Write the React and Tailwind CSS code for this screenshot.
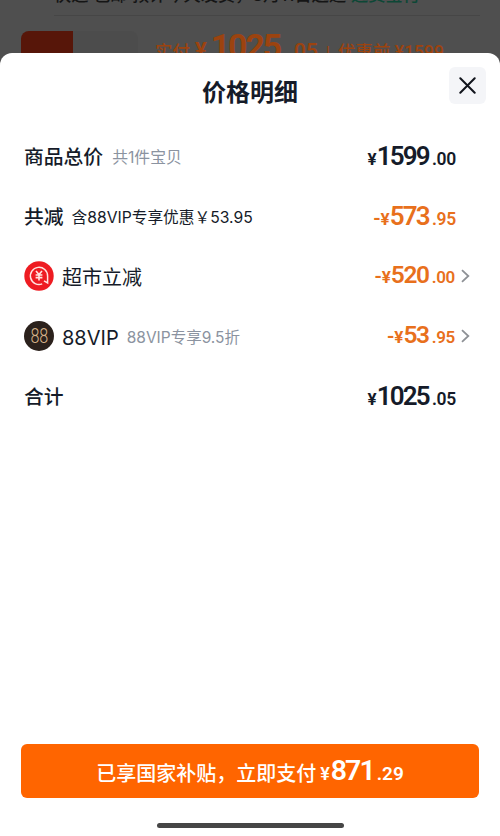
import React from 'react'

function Price({ int, dec, minus, small }) {
    return (
        <div className="flex items-baseline font-['Roboto','Noto_Sans_CJK_SC',sans-serif] font-semibold whitespace-nowrap">
            {minus && <span className="text-[20px] leading-none">-</span>}
            <span className="text-[17px] leading-none font-bold">¥</span>
            <span className={"leading-none " + (small ? "text-[24.5px] tracking-[-1.4px]" : "text-[26px] tracking-[-1.8px]")}>{int}</span>
            <span className={"leading-none tracking-[-0.3px] ml-[3px] " + (small ? "text-[17px]" : "text-[17.5px]")}>.{dec}</span>
        </div>
    )
}

function Arrow() {
    return (
        <svg className="w-[9px] h-[14px]" viewBox="0 0 9 14" fill="none" stroke="#8e9196" strokeWidth="1.8">
            <path d="M1 1.2L7.3 7L1 12.8" />
        </svg>
    )
}

function Row({ children, int, dec, minus, arrow }) {
    return (
        <div className={"flex h-[60px] items-center justify-between pl-6 " + (arrow ? "pr-[30px]" : "pr-11")}>
            <div className="flex items-center whitespace-nowrap">{children}</div>
            <div className={"flex items-center gap-[6px] pb-px " + (minus ? "text-[#e8701c]" : "text-[#151b29]")}>
                <Price int={int} dec={dec} minus={minus} small={arrow} />
                {arrow && <Arrow />}
            </div>
        </div>
    )
}

export default function App() {
    return (
        <div className="relative flex flex-col w-[500px] h-[836px] overflow-hidden bg-[#4f4f4f] font-['Inter','Noto_Sans_CJK_SC',sans-serif] text-[#151b29]">
            {/* dimmed order page */}
            <div className="h-[53px] shrink-0 overflow-hidden">
                <div className="h-[16px] flex items-end ml-[54px] mr-5 border-b border-[#464646] text-[17.2px] whitespace-nowrap">
                    <div className="leading-[20px] pb-[10px] text-[#151515] font-medium">快递 包邮 预计今天发货，8月11日送达</div>
                    <div className="leading-[20px] pb-[10px] ml-[5px] text-[#0d4736] font-medium">运费宝付</div>
                </div>
                <div className="flex">
                    <div className="ml-[21px] mt-[15px] h-[60px] w-[117px] rounded-lg bg-[#4c4c4c] overflow-hidden">
                        <div className="h-full w-[52px] bg-[#571609]"></div>
                    </div>
                    <div className="ml-[17px] mt-[9px] flex items-baseline text-[#9c430f] font-medium whitespace-nowrap font-['Roboto','Noto_Sans_CJK_SC',sans-serif]">
                        <span className="text-[17.5px]">实付</span>
                        <span className="text-[22px] ml-[5px] font-bold">¥</span>
                        <span className="text-[34px] leading-[42px] font-bold ml-1 tracking-[-2.2px]">1025</span>
                        <span className="text-[21px] ml-2 font-semibold">.05</span>
                        <span className="text-[16px] ml-2">|</span>
                        <span className="text-[17.5px] ml-2">优惠前 ¥1599</span>
                    </div>
                </div>
            </div>

            <div className="flex flex-col flex-1 bg-white rounded-t-xl">
                <div className="relative h-[73px] flex justify-center pt-[22px]">
                    <div className="text-[24px] leading-[36px] font-bold">价格明细</div>
                    <div className="absolute right-[14px] top-[14px] w-[37px] h-[37px] rounded-md bg-[#f4f5f8] flex items-center justify-center">
                        <svg className="w-[17px] h-[17px]" viewBox="0 0 17 17" fill="none" stroke="#11141c" strokeWidth="2" strokeLinecap="round">
                            <path d="M1.3 1.3L15.7 15.7M15.7 1.3L1.3 15.7" />
                        </svg>
                    </div>
                </div>

                <Row int="1599" dec="00">
                    <span className="pt-1 text-[19.8px] font-medium">商品总价</span>
                    <span className="pt-[3px] ml-[9px] text-[15.8px] text-[#8b93a0]">共1件宝贝</span>
                </Row>
                <Row int="573" dec="95" minus>
                    <span className="pt-1 text-[19.8px] font-medium">共减</span>
                    <span className="pt-[3px] ml-2 text-[15.7px]">含88VIP专享优惠￥53.95</span>
                </Row>
                <Row int="520" dec="00" minus arrow>
                    <svg className="w-[30px] h-[30px]" viewBox="0 0 30 30" fill="none" stroke="#ffe5e0">
                        <circle cx="15" cy="15" r="14.7" fill="#ee1c22" stroke="none" />
                        <path d="M18.2 22.9A8.6 8.6 0 1 1 23.6 15V22L20 19.8" strokeWidth="1.5" />
                        <path d="M12 10L15 13.5L18 10M11.6 14H18.4M11.6 16.6H18.4M15 13.5V19.5" strokeWidth="1.6" />
                    </svg>
                    <span className="pt-1 ml-2 text-[20px]">超市立减</span>
                </Row>
                <Row int="53" dec="95" minus arrow>
                    {/* segment-style 88 badge */}
                    <div className="w-[30px] h-[30px] rounded-full bg-[#2b211c] text-[#d9b58c] flex items-center justify-center">
                        <span className="text-[17px] leading-none tracking-[-0.3px] scale-y-115 scale-x-95 font-['Roboto'] font-light">88</span>
                    </div>
                    <span className="pt-[3px] ml-2 text-[20px]">88VIP</span>
                    <span className="pt-[3px] ml-2 text-[15.5px] text-[#8b93a0]">88VIP专享9.5折</span>
                </Row>
                <Row int="1025" dec="05">
                    <span className="pt-1 text-[19.8px] font-medium">合计</span>
                </Row>

                <div className="mt-auto mx-[21px] h-[54px] rounded-md bg-[#ff6500] text-white flex items-center justify-center">
                    <span className="text-[20px] font-medium mr-1 pt-[5px]">已享国家补贴，立即支付</span>
                    <div className="flex items-baseline font-['Roboto'] font-semibold whitespace-nowrap leading-none">
                        <span className="text-[18px]">¥</span>
                        <span className="text-[28.5px] tracking-[-2px] ml-px">871</span>
                        <span className="text-[19px] ml-[3px]">.29</span>
                    </div>
                </div>
                <div className="mt-[25px] mb-[8px] self-center w-[187px] h-[5px] rounded-full bg-[#464646]"></div>
            </div>
        </div>
    )
}
